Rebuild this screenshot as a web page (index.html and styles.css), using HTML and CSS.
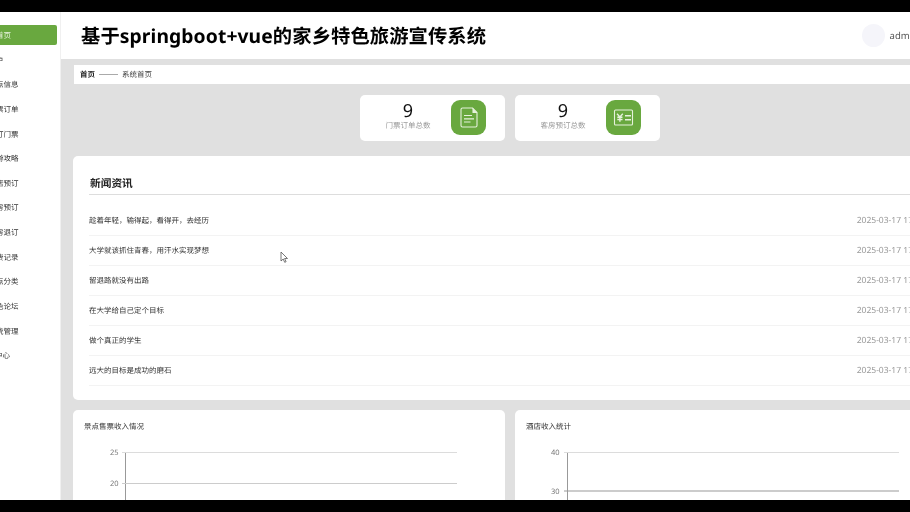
FILE: index.html
```html
<!DOCTYPE html>
<html lang="zh-CN">
<head>
<meta charset="utf-8">
<title>基于springboot+vue的家乡特色旅游宣传系统</title>
<link rel="stylesheet" href="styles.css">
</head>
<body>
<div class="letterbox"></div>
<div class="stage">
  <aside class="sidebar">
    <ul class="menu">
      <li class="menu-item active">首页</li>
      <li class="menu-item narrow">用户</li>
      <li class="menu-item">景点信息</li>
      <li class="menu-item">门票订单</li>
      <li class="menu-item">预订门票</li>
      <li class="menu-item">旅游攻略</li>
      <li class="menu-item">酒店预订</li>
      <li class="menu-item">客房预订</li>
      <li class="menu-item">客房退订</li>
      <li class="menu-item">消费记录</li>
      <li class="menu-item">景点分类</li>
      <li class="menu-item">特色论坛</li>
      <li class="menu-item">系统管理</li>
      <li class="menu-item narrow-long">个人中心</li>
    </ul>
  </aside>
  <div class="main">
    <header class="topbar">
      <h1 class="title">基于springboot+vue的家乡特色旅游宣传系统</h1>
      <div class="user"><span class="avatar"></span><span class="username">admin</span></div>
    </header>
    <div class="content">
      <nav class="crumbs"><b>首页</b><i class="crumb-line"></i><span>系统首页</span></nav>
      <section class="stats">
        <div class="stat">
          <div class="stat-text"><div class="stat-num">9</div><div class="stat-label">门票订单总数</div></div>
          <div class="stat-icon">
            <svg viewBox="0 0 35 35" width="35" height="35" fill="none" stroke="#e6f1dc" stroke-width="1.100"><path d="M11.500 8h10l4.500 4.500v13a1.500 1.500 0 0 1-1.500 1.500h-13a1.500 1.500 0 0 1-1.500-1.500v-16a1.500 1.500 0 0 1 1.500-1.500z"/><path d="M22 8.500v4h4" fill="#e6f1dc"/><path d="M13 15.500h8M13 18.800h10M13 22h6.500" stroke-width="1.200"/></svg>
          </div>
        </div>
        <div class="stat">
          <div class="stat-text"><div class="stat-num">9</div><div class="stat-label">客房预订总数</div></div>
          <div class="stat-icon">
            <svg viewBox="0 0 35 35" width="35" height="35" fill="none" stroke="#e6f1dc" stroke-width="1.100"><rect x="8.500" y="10" width="18" height="15" rx="1"/><path d="M11 13.800l2.900 3.200 2.900-3.200M13.900 17v4.800M11.300 17.300h5.200M11.300 19.500h5.200M19 15.800h6M19 19.800h6" stroke-width="1.400"/></svg>
          </div>
        </div>
      </section>
      <section class="news">
        <h2 class="news-title">新闻资讯</h2>
        <ul class="news-list">
          <li class="news-row"><span>趁着年轻，输得起，看得开，去经历</span><time>2025-03-17 17:21:33</time></li>
          <li class="news-row"><span>大学就该抓住青春，用汗水实现梦想</span><time>2025-03-17 17:21:33</time></li>
          <li class="news-row"><span>留退路就没有出路</span><time>2025-03-17 17:21:33</time></li>
          <li class="news-row"><span>在大学给自己定个目标</span><time>2025-03-17 17:21:33</time></li>
          <li class="news-row"><span>做个真正的学生</span><time>2025-03-17 17:21:33</time></li>
          <li class="news-row"><span>远大的目标是成功的磨石</span><time>2025-03-17 17:21:33</time></li>
        </ul>
      </section>
      <section class="charts">
        <div class="chart-card">
          <h3 class="chart-title">景点售票收入情况</h3>
          <svg class="chart" viewBox="0 0 432 100" width="432" height="100">
            <path class="axis" d="M52.500 20v80"/>
            <path class="grid-light" d="M49 20.500h335"/>
            <path class="grid-mid" d="M49 51.500h335"/>
            <text x="45.500" y="23" text-anchor="end">25</text>
            <text x="45.500" y="54" text-anchor="end">20</text>
          </svg>
        </div>
        <div class="chart-card">
          <h3 class="chart-title">酒店收入统计</h3>
          <svg class="chart" viewBox="0 0 432 100" width="432" height="100">
            <path class="axis" d="M52.500 20v80"/>
            <path class="grid-light" d="M49 20.500h335"/>
            <path class="grid-dark" d="M49 59h335"/>
            <text x="44.500" y="23" text-anchor="end">40</text>
            <text x="44.500" y="61.500" text-anchor="end">30</text>
          </svg>
        </div>
      </section>
    </div>
  </div>
  <svg class="cursor" viewBox="0 0 9 13" width="9" height="13"><path d="M1 1v9l2.200-2 1.500 3.300 1.400-.6-1.500-3.200h2.900z" fill="#fff" stroke="#555" stroke-width=".8"/></svg>
</div>
<div class="letterbox"></div>
</body>
</html>
```

FILE: styles.css
```css
* { box-sizing: border-box; }
html, body { margin: 0; padding: 0; height: 100%; background: #000; overflow: hidden; }
body {
  display: flex;
  flex-direction: column;
  font-family: "Noto Sans", "Noto Sans CJK SC", sans-serif;
  color: #333;
  text-rendering: geometricPrecision;
}
ul { list-style: none; margin: 0; padding: 0; }
h1, h2, h3 { margin: 0; }
.letterbox { position: relative; z-index: 1; height: 12px; flex: none; background: #000; }
.stage {
  position: relative;
  flex: 1;
  display: flex;
  overflow: hidden;
  background: #e0e0e0;
  filter: blur(0.35px);
}

.sidebar {
  flex: none;
  width: 111px;
  margin-left: -50px;
  padding-top: 13px;
  background: #fff;
  border-right: 1px solid #f0f0f0;
}
.menu { display: flex; flex-direction: column; gap: 4.650px; }
.menu-item {
  width: 107px;
  height: 20px;
  padding-top: 1px;
  line-height: 20px;
  text-align: center;
  font-size: 7.500px;
  color: #333;
}
.menu-item.narrow { padding-right: 15px; }
.menu-item.narrow-long { padding-right: 17px; }
.menu-item.active {
  background: #69a83f;
  color: #e8f3df;
  border-radius: 2px;
}

.main { flex: none; width: 900px; display: flex; flex-direction: column; }
.topbar {
  flex: none;
  height: 47px;
  display: flex;
  align-items: center;
  justify-content: space-between;
  padding-left: 20px;
  background: #fff;
}
.title { font-size: 19.300px; letter-spacing: 0.1px; line-height: 47px; height: 47px; margin-top: -1px; font-weight: 700; color: #000; white-space: nowrap; }
.user { display: flex; align-items: center; gap: 5px; margin-right: 43px; }
.avatar { width: 23px; height: 23px; border-radius: 50%; background: #f5f5fa; }
.username { font-size: 9.500px; color: #555; }

.content { flex: 1; padding: 6px 0 0 12px; }
.crumbs {
  display: flex;
  align-items: center;
  height: 19px;
  margin-left: 1px;
  padding-left: 6px;
  background: #fff;
  font-size: 7.500px;
  color: #444;
}
.crumbs b { color: #222; }
.crumb-line { width: 19px; height: 1px; margin: 0 4px 0 4px; background: #aaa; }

.stats { display: flex; justify-content: center; gap: 10px; width: 874px; margin-top: 10.500px; }
.stat {
  width: 145px;
  height: 46px;
  display: flex;
  align-items: center;
  justify-content: space-between;
  padding: 0 19px 1px 12px;
  background: #fff;
  border-radius: 5px;
}
.stat-text { width: 72px; padding-bottom: 1px; text-align: center; }
.stat-num { font-size: 18px; line-height: 19px; color: #111; }
.stat-label { font-size: 7.500px; line-height: 10px; color: #999; }
.stat-icon { width: 35px; height: 35px; border-radius: 9px; background: #69a83f; }
.stat-icon svg { display: block; }

.news {
  width: 874px;
  height: 244px;
  margin-top: 15.500px;
  padding: 20px 16px 0;
  background: #fff;
  border-radius: 5px;
}
.news-title {
  height: 19px;
  line-height: 16px;
  padding-left: 1px;
  font-size: 10.700px;
  font-weight: 700;
  color: #222;
  border-bottom: 1px solid #ddd;
}
.news-list { margin-top: 11px; }
.news-row {
  height: 30px;
  display: flex;
  align-items: center;
  justify-content: space-between;
  font-size: 7.500px;
  color: #333;
  border-bottom: 1px solid #f3f3f3;
}
.news-row time { font-size: 8.500px; color: #999; margin-right: -6px; }

.charts { display: flex; gap: 10px; width: 874px; margin-top: 10px; }
.chart-card { width: 432px; height: 200px; background: #fff; border-radius: 5px; }
.chart-title { padding: 12px 0 0 11px; font-size: 7.500px; line-height: 10px; font-weight: 400; color: #333; }
.chart { display: block; }
.chart text { font-size: 7.500px; fill: #777; }
.axis { stroke: #999; stroke-width: 1; fill: none; }
.grid-light { stroke: #dcdcdc; stroke-width: 1.200; fill: none; }
.grid-mid { stroke: #ccc; stroke-width: 1.200; fill: none; }
.grid-dark { stroke: #999; stroke-width: 1; fill: none; }

.cursor { position: absolute; left: 280px; top: 239px; }
```
